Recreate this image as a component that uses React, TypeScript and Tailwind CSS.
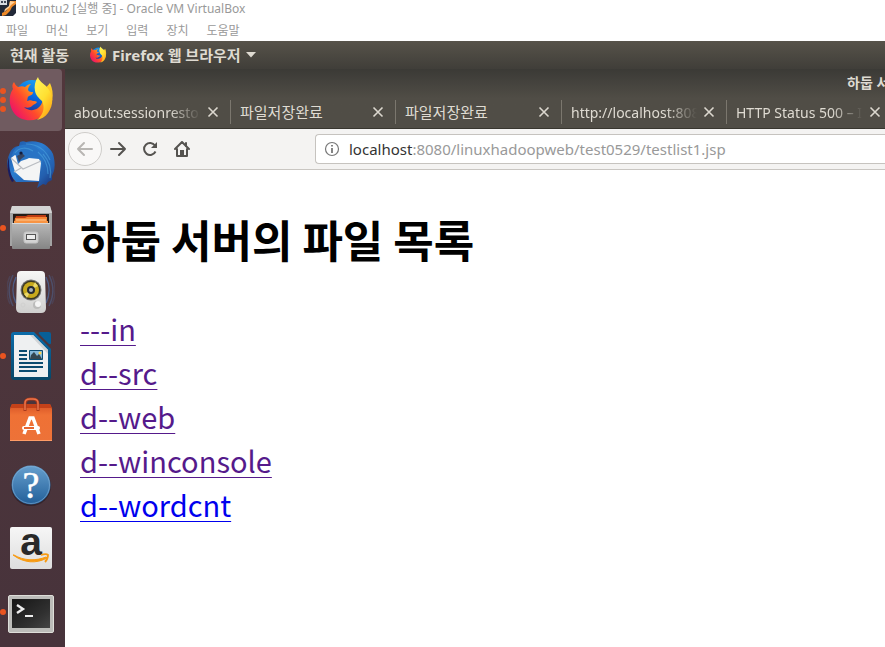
import type { ReactNode } from "react";

const ui = "font-['Noto_Sans','Noto_Sans_CJK_KR',sans-serif]";
const cjk = "font-['Noto_Sans_CJK_KR','Noto_Sans',sans-serif]";

function FirefoxIcon({ size, id }: { size: number; id: string }) {
  return (
    <svg width={size} height={size} viewBox="0 0 48 48" aria-hidden="true" className="shrink-0">
      <defs>
        <linearGradient id={`${id}b`} x1="0.7" y1="0" x2="0.3" y2="1">
          <stop offset="0" stopColor="#1ba5f5" />
          <stop offset="0.5" stopColor="#0a66dc" />
          <stop offset="1" stopColor="#2a2a86" />
        </linearGradient>
        <linearGradient id={`${id}f`} x1="0.95" y1="0.1" x2="0.05" y2="0.75">
          <stop offset="0" stopColor="#ffd52a" />
          <stop offset="0.35" stopColor="#ff9a1a" />
          <stop offset="0.65" stopColor="#ff4a2c" />
          <stop offset="1" stopColor="#ee1467" />
        </linearGradient>
        <linearGradient id={`${id}y`} x1="0.2" y1="0" x2="0.8" y2="1">
          <stop offset="0" stopColor="#fff35a" />
          <stop offset="0.5" stopColor="#ffe032" />
          <stop offset="1" stopColor="#ff9d12" />
        </linearGradient>
      </defs>
      <circle cx="25" cy="21" r="17" fill={`url(#${id}b)`} />
      <path d="M7 6c1 2 2 4 4 5 3-1 5-1 7 0 2-2 4-3 6-3-2 2-3 4-3 6 1 2 3 2 5 2 0 2-1 3-4 4-2 1-1 3-2 5 3-1 4-1 6 0 2 0 3 0 4 1-1 2-3 2-5 4-2 2-5 2-8 1 4 4 10 4 14 1 5-4 6-10 5-17l7-8c5 11 3 23-5 31-9 9-24 8-31-1-5-7-6-17-1-24-1-2-1-5 1-7z" fill={`url(#${id}f)`} />
      <path d="M31 1c1 4 5 6 8 9 8 8 8 19 2 27-3 4-7 6-11 7 7-6 8-13 5-19-3-3-6-5-7-10-1-5 0-10 3-14z" fill={`url(#${id}y)`} />
    </svg>
  );
}

function ThunderbirdIcon() {
  return (
    <svg width="48" height="48" viewBox="0 0 48 48" aria-hidden="true">
      <defs>
        <linearGradient id="tb" x1="0" y1="0" x2="1" y2="1">
          <stop offset="0" stopColor="#1c4e9d" />
          <stop offset="0.4" stopColor="#2b7dd0" />
          <stop offset="0.75" stopColor="#235fae" />
          <stop offset="1" stopColor="#182a70" />
        </linearGradient>
      </defs>
      <path d="M12 6 13 2c2-1 4-1 6 0 12-3 23 3 27 12 2 7 2 12 1 17l-2 5v4l-4 2-2 3-3-1-6 4 2-6H9l-4-5C0 31-1 22 2 15 4 9 8 6 12 6z" fill="url(#tb)" />
      <path d="M5 17C6 8 12 4 20 5c13 1 19 10 14 24-1-7-5-11-11-11-4-1-5 1-10 1-3-2-6-3-8-2z" fill="#2874c5" />
      <path d="M8 13C12 7 20 7 26 11M19 4c12 0 20 7 24 16M31 12c7 6 10 12 10 22M36 14c7 8 9 15 7 24" fill="none" stroke="#4aa1dd" strokeWidth="1.200" opacity="0.6" />
      <path d="M2 20c0 10 2 15 5 21l-2 1C1 35-1 26 2 17z" fill="#171c61" />
      <path d="M4 18 8 15l14 3 10 1 2 4-2 18-15-1-9-8z" fill="#f4f5f5" />
      <path d="m4 18 12 11 18-8M14 28l-7 4" fill="none" stroke="#b9bdc2" strokeWidth="1.200" />
      <path d="M8 13l11-2 7 5-6 3-6 2-3 3z" fill="#2874c5" />
      <path d="m10 16 2 6 2-3 4-3-3-3z" fill="#38455f" />
      <circle cx="14" cy="13" r="1.600" fill="#111c3e" />
    </svg>
  );
}

function FilesIcon() {
  return (
    <svg width="48" height="48" viewBox="0 0 48 48" aria-hidden="true">
      <defs>
        <linearGradient id="fc" x1="0" y1="0" x2="0" y2="1">
          <stop offset="0" stopColor="#b8b8b8" />
          <stop offset="1" stopColor="#858585" />
        </linearGradient>
      </defs>
      <path d="M5 2h38l2 6v34H3V8z" fill="#a4a4a4" />
      <path d="M5 2h38l2 7H3z" fill="#d4d4d4" />
      <path d="M6 10h36v10H6z" fill="#251c18" />
      <path d="M9 12h10l2-1h18v2H22l-2 2H8z" fill="#be3c13" />
      <path d="M8 14h10l2-1h20v7H7z" fill="#f78434" />
      <path d="M7 17h34v2H7z" fill="#f89443" />
      <path d="M9 16h30" stroke="#ffd49c" />
      <rect x="5" y="19" width="38" height="26" rx="1" fill="url(#fc)" />
      <path d="M5 19.500h38" stroke="#d8d8d8" />
      <rect x="17" y="28" width="14" height="11" rx="2" fill="#d3d3d3" stroke="#c4c4c4" />
      <rect x="19.500" y="30.500" width="9" height="5" fill="#eee" stroke="#555" />
    </svg>
  );
}

function SpeakerIcon() {
  return (
    <svg width="48" height="48" viewBox="0 0 48 48" aria-hidden="true">
      <defs>
        <linearGradient id="sp" x1="0" y1="0" x2="0" y2="1">
          <stop offset="0" stopColor="#f7f7f6" />
          <stop offset="1" stopColor="#cfcfce" />
        </linearGradient>
      </defs>
      <g fill="none" stroke="#4e6797" strokeWidth="1.500">
        <path d="M9 9C5 17 5 27 9 35M39 9c4 8 4 18 0 26" opacity="0.8" />
        <path d="M6 7C1 17 1 28 6 38M42 7c5 10 5 21 0 31" opacity="0.5" />
        <path d="M3 8c-4 9-4 19 0 28M45 8c4 9 4 19 0 28" opacity="0.25" />
      </g>
      <path d="M14 3h20q4 0 4 4l1 33q0 5-5 5H14q-5 0-5-5l1-33q0-4 4-4z" fill="url(#sp)" />
      <circle cx="24" cy="22" r="10.500" fill="#777" />
      <circle cx="24" cy="22" r="9.500" fill="#3a3721" />
      <circle cx="24" cy="22" r="8" fill="#c7a91d" />
      <path d="m24 22-7 4 3 4zM24 22l7-4-3-4z" fill="#ecd968" />
      <circle cx="24" cy="22" r="4" fill="#252a33" />
      <circle cx="24" cy="22" r="2" fill="#a8b1b9" />
      <circle cx="30" cy="37" r="4" fill="#bcbcbb" />
      <circle cx="31" cy="36" r="3" fill="#f4f4f4" />
      <circle cx="16" cy="37" r="2" fill="none" stroke="#d0d0cf" />
    </svg>
  );
}

function WriterIcon() {
  return (
    <svg width="48" height="48" viewBox="0 0 48 48" aria-hidden="true">
      <defs>
        <linearGradient id="wr" x1="0" y1="0" x2="0" y2="1">
          <stop offset="0" stopColor="#0b6caa" />
          <stop offset="1" stopColor="#064768" />
        </linearGradient>
      </defs>
      <path d="M7 0h20l17 17v28q0 3-3 3H7q-3 0-3-3V3q0-3 3-3z" fill="url(#wr)" />
      <path d="M33 0h9q2 0 2 2v9q0 2-2 1L32 2q-1-2 1-2z" fill="#075f98" />
      <path d="M7 3h19l15 15v27H7z" fill="#eef0f1" />
      <path d="m26 3 15 15v4L23 3z" fill="#d1d4d6" />
      <path d="M12 19h8M12 23h8M12 27h8M12 31h24M12 35h24M12 39h18" stroke="#0b4c70" strokeWidth="2" />
      <path d="M22.500 18.500h13v9h-13z" fill="#84b8d8" stroke="#0b4c70" />
      <circle cx="33" cy="21" r="1.500" fill="#ffd34b" />
      <path d="m23 27 1-4 3-3 3 4 2-2 3 5z" fill="#34474f" />
    </svg>
  );
}

function SoftwareIcon() {
  return (
    <svg width="48" height="48" viewBox="0 0 48 48" aria-hidden="true">
      <defs>
        <linearGradient id="sw" x1="0" y1="0" x2="0" y2="1">
          <stop offset="0" stopColor="#d65325" />
          <stop offset="0.3" stopColor="#ef7135" />
          <stop offset="1" stopColor="#ed7238" />
        </linearGradient>
      </defs>
      <path d="M5 8h38l2 5v32H3V13z" fill="url(#sw)" />
      <path d="M5 8h38l2 4H3z" fill="#c44119" />
      <path d="M18 15V8q0-5 5-5h3q5 0 5 5v7" fill="none" stroke="#a93a1c" strokeWidth="3" />
      <path d="M18 14V7q0-4 5-4h3q5 0 5 4v7" fill="none" stroke="#ed754a" strokeWidth="1.500" />
      <path d="m17 38 6-16h3l6 16" fill="none" stroke="#fff" strokeWidth="3.500" />
      <rect x="15" y="30" width="18" height="4" rx="2" fill="#fff" />
      <path d="M17 32h10" stroke="#e66631" strokeWidth="2" />
      <path d="M3 44.500h42" stroke="#ff9c67" />
    </svg>
  );
}

function HelpIcon() {
  return (
    <svg width="48" height="48" viewBox="0 0 48 48" aria-hidden="true">
      <defs>
        <linearGradient id="hp" x1="0" y1="0" x2="0" y2="1">
          <stop offset="0" stopColor="#669fce" />
          <stop offset="1" stopColor="#225f99" />
        </linearGradient>
      </defs>
      <circle cx="24" cy="26" r="20" fill="#34242c" />
      <circle cx="24" cy="25" r="19.500" fill="url(#hp)" />
      <circle cx="24" cy="25" r="18.500" fill="none" stroke="#83b1d7" strokeWidth="1" opacity="0.6" />
      <text x="24" y="38" textAnchor="middle" fill="#fff" fontSize="38" fontFamily="Liberation Serif, serif" stroke="#fff" strokeWidth="0.500">?</text>
    </svg>
  );
}

function AmazonIcon() {
  return (
    <svg width="48" height="48" viewBox="0 0 48 48" aria-hidden="true" className="overflow-visible">
      <defs>
        <linearGradient id="az" x1="0" y1="0" x2="0" y2="1">
          <stop offset="0" stopColor="#f6f6f6" />
          <stop offset="1" stopColor="#dedede" />
        </linearGradient>
      </defs>
      <rect x="3" y="3" width="42" height="42" rx="2" fill="url(#az)" />
      <text x="24" y="31" textAnchor="middle" fill="#282828" fontSize="39" fontWeight="bold" fontFamily="Liberation Sans, sans-serif">a</text>
      <path d="M6 31c11 8 23 9 34 3l-1-1c-10 4-22 4-32-2z" fill="#f79b13" stroke="#f79b13" />
      <path d="M34 31c3-1 6-1 7 0 0 2-1 5-3 7" fill="none" stroke="#f79b13" strokeWidth="1.800" />
    </svg>
  );
}

function TerminalIcon() {
  return (
    <svg width="48" height="48" viewBox="0 0 48 48" aria-hidden="true">
      <defs>
        <linearGradient id="tm" x1="0" y1="0" x2="1" y2="1">
          <stop offset="0" stopColor="#151515" />
          <stop offset="0.65" stopColor="#303030" />
          <stop offset="1" stopColor="#454545" />
        </linearGradient>
      </defs>
      <rect x="1.500" y="7.500" width="45" height="37" rx="1.500" fill="#bcbcb9" stroke="#deded9" />
      <rect x="5" y="11" width="38" height="29" fill="url(#tm)" />
      <path d="m10 17 6 4-6 4" fill="none" stroke="#eee" strokeWidth="2.400" />
      <path d="M18 28h8" stroke="#eee" strokeWidth="2" />
    </svg>
  );
}

function DockItem({ label, dots = 0, active = false, children }: { label: string; dots?: number; active?: boolean; children: ReactNode }) {
  return (
    <button
      type="button"
      aria-label={label}
      className={`relative flex h-[62px] w-[62px] shrink-0 items-center justify-center rounded-r ${active ? "bg-[#705b60]" : ""}`}
    >
      <span className="absolute inset-y-0 left-0 flex flex-col items-center justify-center gap-[3px]">
        {Array.from({ length: dots }, (_, i) => (
          <i key={i} className="block h-[6px] w-[6px] rounded-full bg-[#e95420]" />
        ))}
      </span>
      {children}
    </button>
  );
}

function Close() {
  return (
    <svg width="12" height="12" viewBox="0 0 12 12" fill="none" stroke="#dcd8cf" strokeWidth="1.600" aria-hidden="true">
      <path d="m1.500 1.500 9 9M10.500 1.500l-9 9" />
    </svg>
  );
}

const tabs = [
  { title: "about:sessionrestore", fade: true, width: "w-[166px]" },
  { title: "파일저장완료", fade: false, width: "w-[165px]" },
  { title: "파일저장완료", fade: false, width: "w-[166px]" },
  { title: "http://localhost:8080", fade: true, width: "w-[165px]" },
  { title: "HTTP Status 500 – Internal", fade: true, width: "w-[165px]" },
];

const files = [
  { name: "---in", visited: true },
  { name: "d--src", visited: true },
  { name: "d--web", visited: true },
  { name: "d--winconsole", visited: true },
  { name: "d--wordcnt", visited: false },
];

export default function App() {
  return (
    <div className={`flex min-h-screen flex-col overflow-hidden bg-white ${ui}`}>
      <header className="shrink-0 bg-white text-[#999]">
        <div className="flex h-[16px] items-center gap-[5px] text-[12px] leading-[18px]">
          <svg width="16" height="16" viewBox="0 0 16 16" aria-hidden="true">
            <path d="M0 0h16v13l-3 3H0z" fill="#222938" />
            <path d="M0 0h7v5H0z" fill="#d8dce2" />
            <path d="M1 1h2v2H1zM4 1h2v2H4z" fill="#434b5b" />
            <path d="M10 1h6v3l-4 3-2 4-4 4-4 1v-3l4-2 3-4z" fill="#f08a27" />
            <path d="m10 1 5 1-4 3-2 3-5 4 1-3 4-3z" fill="#ffd09a" />
          </svg>
          <span className="pt-px">ubuntu2 [실행 중] - Oracle VM VirtualBox</span>
        </div>
        <nav className={`flex h-[25px] items-center gap-[18px] px-[6px] pt-[3px] text-[12px] ${cjk}`}>
          <button type="button">파일</button>
          <button type="button">머신</button>
          <button type="button">보기</button>
          <button type="button">입력</button>
          <button type="button">장치</button>
          <button type="button">도움말</button>
        </nav>
      </header>

      <div className="flex h-[28px] shrink-0 items-center gap-5 bg-linear-to-b from-[#57534a] to-[#403e39] px-[10px] text-[15px] font-bold text-[#dfdbd2]">
        <button type="button">현재 활동</button>
        <button type="button" className="flex items-center gap-[5px]">
          <FirefoxIcon size={18} id="s" />
          <span>Firefox 웹 브라우저</span>
          <svg width="10" height="6" viewBox="0 0 10 6" aria-hidden="true">
            <path d="M0 0h10L5 5.500z" fill="#dfdbd2" />
          </svg>
        </button>
      </div>

      <div className="flex min-h-0 grow">
        <aside className="flex w-[65px] shrink-0 flex-col gap-[2px] bg-linear-to-b from-[#52373c] to-[#47333b]">
          <DockItem label="Firefox" dots={3} active><FirefoxIcon size={48} id="d" /></DockItem>
          <DockItem label="Thunderbird"><ThunderbirdIcon /></DockItem>
          <DockItem label="Files" dots={1}><FilesIcon /></DockItem>
          <DockItem label="Rhythmbox"><SpeakerIcon /></DockItem>
          <DockItem label="Writer" dots={1}><WriterIcon /></DockItem>
          <DockItem label="Software"><SoftwareIcon /></DockItem>
          <DockItem label="Help"><HelpIcon /></DockItem>
          <DockItem label="Amazon"><AmazonIcon /></DockItem>
          <DockItem label="Terminal" dots={1}><TerminalIcon /></DockItem>
        </aside>

        <div className="flex min-w-0 grow flex-col">
          <div className="flex h-[60px] shrink-0 flex-col overflow-hidden border-b border-[#38362f] bg-linear-to-b from-[#3b3a36] to-[#504d46] to-50% text-[#dfdbd2]">
            <div className="flex h-[27px] items-center justify-end overflow-hidden text-[14px] font-bold">
              <div className="w-[38px] whitespace-nowrap">하둡 서버의 파일 목록</div>
            </div>
            <div className="flex h-[32px] items-center">
              {tabs.map((tab, i) => (
                <div key={i} className={`flex h-6 shrink-0 items-center gap-[6px] pr-[11px] pl-[9px] ${tab.width} ${i < 4 ? "border-r border-[#7b776e]" : ""}`}>
                  <span className={`min-w-0 grow overflow-hidden whitespace-nowrap ${tab.fade ? "mask-r-from-75% mask-r-to-100% text-[14px]" : "text-[15px]"}`}>{tab.title}</span>
                  <button type="button" aria-label="Close tab" className="shrink-0"><Close /></button>
                </div>
              ))}
            </div>
          </div>

          <div className="flex h-[41px] shrink-0 items-center border-b border-[#c9c6c2] bg-[#f4f3f2] pl-[3px]">
            <button type="button" aria-label="Back" className="flex h-[34px] w-[34px] items-center justify-center rounded-full border border-[#cfcdca] bg-[#f9f8f7]">
              <svg width="18" height="16" viewBox="0 0 18 16" fill="none" stroke="#b8b6b3" strokeWidth="2" strokeLinecap="round" strokeLinejoin="round" aria-hidden="true">
                <path d="M16 8H2m6-6L2 8l6 6" />
              </svg>
            </button>
            <button type="button" aria-label="Forward" className="flex w-8 justify-center">
              <svg width="18" height="16" viewBox="0 0 18 16" fill="none" stroke="#555350" strokeWidth="2" strokeLinecap="round" strokeLinejoin="round" aria-hidden="true">
                <path d="M2 8h14m-6-6 6 6-6 6" />
              </svg>
            </button>
            <button type="button" aria-label="Reload" className="flex w-8 justify-center">
              <svg width="16" height="16" viewBox="0 0 16 16" fill="none" stroke="#555350" strokeWidth="2" aria-hidden="true">
                <path d="M13.500 10.500A6 6 0 1 1 13 4.500" />
                <path d="M15 1v6H9z" fill="#555350" stroke="none" />
              </svg>
            </button>
            <button type="button" aria-label="Home" className="flex w-8 justify-center">
              <svg width="16" height="16" viewBox="0 0 16 16" fill="none" stroke="#555350" strokeWidth="2" strokeLinejoin="round" strokeLinecap="round" aria-hidden="true">
                <path d="m1 8 7-7 7 7M3 8v7h10V8" />
                <path d="M6 15V9h4v6" fill="#555350" stroke="none" />
                <path d="M12 2v3" />
              </svg>
            </button>
            <div className="ml-[117px] flex h-[30px] grow items-center gap-[9px] rounded-l border border-r-0 border-[#c6c3bf] bg-white pl-2">
              <svg width="16" height="16" viewBox="0 0 16 16" fill="none" stroke="#777" aria-hidden="true">
                <circle cx="8" cy="8" r="6.500" strokeWidth="1.200" />
                <path d="M8 7v5M8 4v1.500" strokeWidth="1.800" />
              </svg>
              <a href="#top" className="text-[15px] whitespace-nowrap text-[#999]">
                <span className="text-[#333]">localhost</span>:8080/linuxhadoopweb/test0529/testlist1.jsp
              </a>
            </div>
          </div>

          <main className={`grow bg-white px-[15px] pt-9 ${cjk}`}>
            <h1 className="text-[44px] leading-[66px] font-bold whitespace-nowrap text-black">하둡 서버의 파일 목록</h1>
            <ul className="mt-[34px]">
              {files.map((file) => (
                <li key={file.name} className="h-[44px] text-[29px] leading-[44px]">
                  <a href="#file" className={`underline decoration-1 underline-offset-[4px] ${file.visited ? "text-[#551a8b]" : "text-[#0000ee]"}`}>
                    {file.name}
                  </a>
                </li>
              ))}
            </ul>
          </main>
        </div>
      </div>
    </div>
  );
}
